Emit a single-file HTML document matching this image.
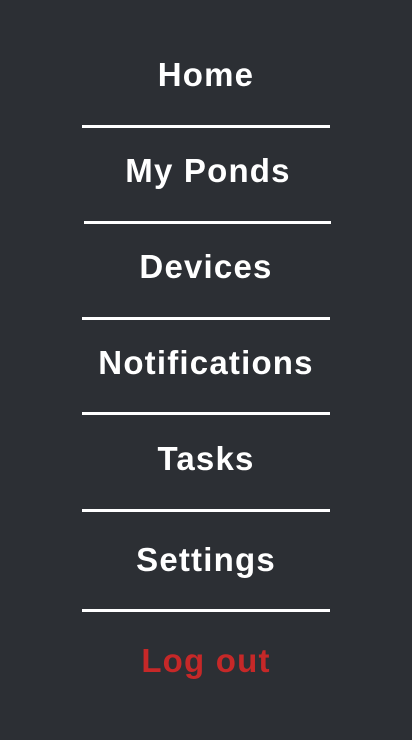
<!DOCTYPE html>
<html><head><style>
html,body{margin:0;padding:0;width:412px;height:740px;background:#2c2f34;overflow:hidden}
.t{position:absolute;left:0;width:412px;text-align:center;font-family:"Liberation Sans",sans-serif;font-weight:bold;font-size:33px;letter-spacing:1.2px;color:#fff;line-height:34px}
.l{position:absolute;height:3px;background:#fff}
</style></head><body>
<div class="t" style="top:58px">Home</div>
<div class="l" style="top:125px;left:82px;width:248px"></div>
<div class="t" style="top:154px;left:2px">My Ponds</div>
<div class="l" style="top:221px;left:84px;width:247px"></div>
<div class="t" style="top:250px">Devices</div>
<div class="l" style="top:317px;left:82px;width:248px"></div>
<div class="t" style="top:346px">Notifications</div>
<div class="l" style="top:412px;left:82px;width:248px"></div>
<div class="t" style="top:442px">Tasks</div>
<div class="l" style="top:509px;left:82px;width:248px"></div>
<div class="t" style="top:543px">Settings</div>
<div class="l" style="top:609px;left:82px;width:248px"></div>
<div class="t" style="top:644px;color:#c62828">Log out</div>
</body></html>
